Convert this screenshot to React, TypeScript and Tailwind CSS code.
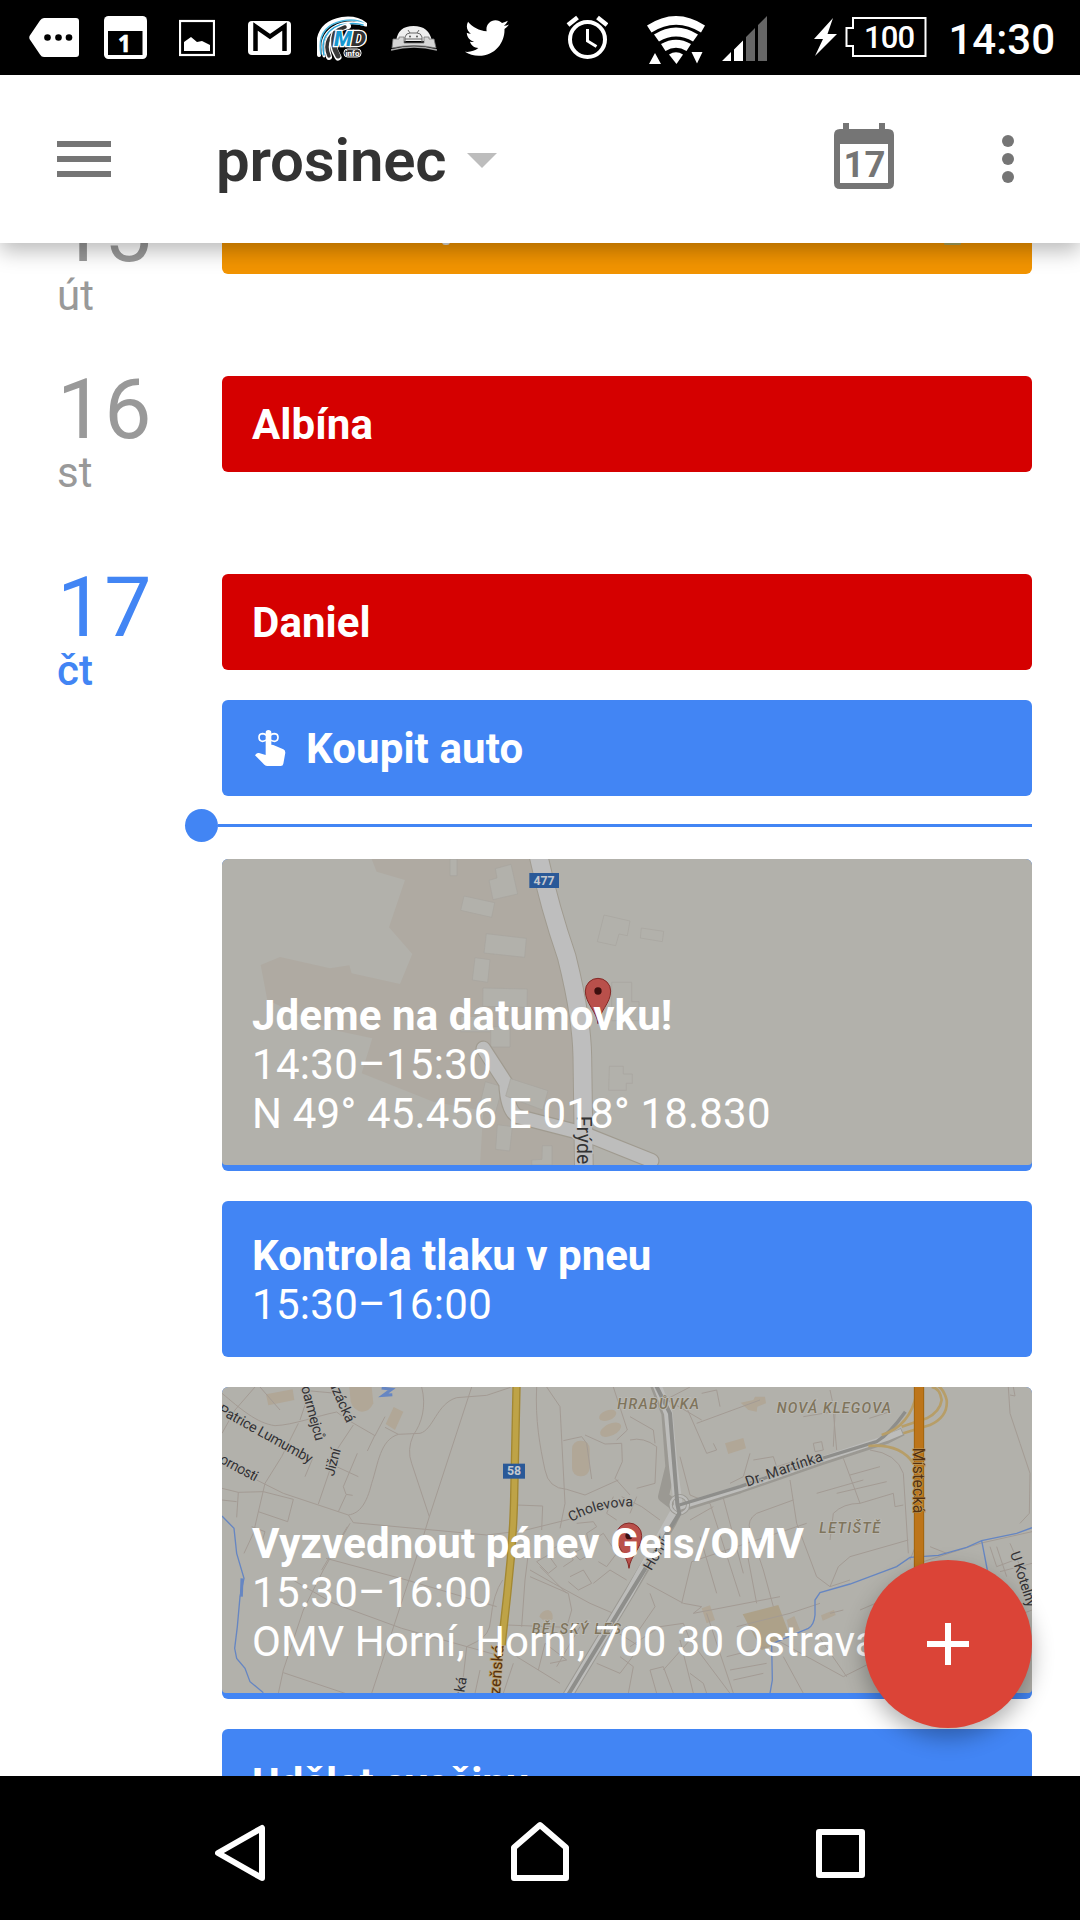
import React from "react";
import {FaTwitter} from "react-icons/fa";

const StatusBar = () => (
    <div className="flex h-[75px] w-full shrink-0 bg-black text-white">
        <svg className="ml-[29px] h-[75px] w-[50px]" viewBox="29 0 50 75">
            <path d="M44 18H76Q79 18 79 21V54Q79 57 76 57H44Q41.500 57 40 54.500L29.500 39Q29 37.500 29.500 36L40 20.500Q41.500 18 44 18Z" fill="#fff"/>
            <circle cx="47.500" cy="37.500" r="3.300"/>
            <circle cx="58.500" cy="37.500" r="3.300"/>
            <circle cx="69" cy="37.500" r="3.300"/>
        </svg>
        <svg className="ml-[25px] h-[75px] w-[43px]" viewBox="105 0 43 75">
            <rect x="105" y="16" width="43" height="43" rx="4.500" fill="#fff"/>
            <rect x="109" y="31" width="34.500" height="24"/>
            <text x="125.500" y="51.500" textAnchor="middle" fill="#fff" stroke="#fff" strokeWidth=".6" fontSize="22.500" fontWeight="700" fontFamily="Noto Sans, sans-serif">1</text>
        </svg>
        <svg className="ml-[32px] h-[75px] w-[36px]" viewBox="180 0 36 75">
            <rect x="181" y="21" width="34" height="34" fill="none" stroke="#fff" strokeWidth="2.200"/>
            <path d="M185 51V42L192 37L198 42L203 41L211 45V51Z" fill="#fff"/>
        </svg>
        <svg className="ml-[33px] h-[75px] w-[43px]" viewBox="248 0 43 75">
            <rect x="248" y="21" width="43" height="34" rx="4" fill="#fff"/>
            <path d="M255.500 51V26.500L270 36.500L284.500 26.500V51" fill="none" stroke="#000" strokeWidth="4.500"/>
        </svg>
        <svg className="ml-[26px] h-[75px] w-[50px]" viewBox="317 0 50 75">
            <g fill="none" strokeLinecap="round">
                <path d="M319 55Q314 24 342 19Q356 17 365 24" stroke="#fff" strokeWidth="4"/>
                <path d="M321 54Q316 27 342 21Q356 18 365 24" stroke="#4db8e0" strokeWidth="1.500"/>
                <path d="M324 56Q318 32 342 24Q354 21 366 25" stroke="#fff" strokeWidth="3"/>
                <path d="M324 55Q319 33 340 25Q354 22 363 25" stroke="#2ba5d8" strokeWidth="1.500"/>
                <path d="M329 57Q321 33 348 26" stroke="#fff" strokeWidth="6"/>
                <path d="M329 56Q321 36 345 27" stroke="#333" strokeWidth="3.500"/>
                <path d="M338 57Q330 44 335 33" stroke="#fff" strokeWidth="7"/>
                <path d="M338 56Q331 44 335 33" stroke="#3b3b3b" strokeWidth="5"/>
            </g>
            <g fontFamily="Roboto, sans-serif" fontSize="21" fontWeight="900" fontStyle="italic" stroke="#fff" strokeWidth="2.500" paintOrder="stroke">
                <text x="334" y="46" fill="#1797cf" textLength="18" lengthAdjust="spacingAndGlyphs">M</text>
                <text x="351" y="46" fill="#333" textLength="15" lengthAdjust="spacingAndGlyphs">D</text>
            </g>
            <rect x="344" y="49" width="17" height="8" rx="3.500" fill="#333" stroke="#fff"/>
            <text x="352.500" y="56" textAnchor="middle" fill="#fff" fontSize="8" fontWeight="700" fontFamily="Roboto, sans-serif">info</text>
        </svg>
        <svg className="ml-[24px] h-[75px] w-[46px]" viewBox="391 0 46 75">
            <path d="M396 41Q398 26 413.500 26Q429 26 432 41Z" fill="#eee"/>
            <path d="M393 39H399V37H404V43H424V37H429V39H434L436 48Q414 43 392 48Z" fill="#d6d6d6" stroke="#777" strokeWidth=".8"/>
            <path d="M405 42V37Q406 33 410 33L408 30M422 42V37Q421 33 417 33L419 30M410 33H417M405 39H422" fill="none" stroke="#666"/>
            <path d="M391 50Q414 44 437 50" fill="none" stroke="#aaa" strokeWidth="1.500"/>
            <circle cx="410" cy="36.500" r="1" fill="#555"/>
            <circle cx="417" cy="36.500" r="1" fill="#555"/>
        </svg>
        <FaTwitter className="mt-[15.500px] ml-[28px] h-[44px] w-[44px]"/>
        <svg className="ml-[56.500px] h-[75px] w-[42px]" viewBox="566 0 42 75">
            <circle cx="587.500" cy="39.500" r="17.500" fill="none" stroke="#fff" strokeWidth="4"/>
            <path d="M587.500 29V41L596.500 46.500" fill="none" stroke="#fff" strokeWidth="3"/>
            <path d="M568 25L577.500 17.500M607 25L597.500 17.500" stroke="#fff" strokeWidth="4.500"/>
        </svg>
        <svg className="ml-[39px] h-[75px] w-[58px]" viewBox="647 0 58 75">
            <path d="M647 25.500Q676 6.500 705 25.500L701 32.500Q676 17 651.500 32.500Z" fill="#fff"/>
            <path d="M654 34.500Q676 20.500 698 34.500L693 41.500Q676 31.500 659 41.500Z" fill="#fff"/>
            <path d="M661 44Q676 35.500 691 44L686.500 51Q676 44.500 665.500 51Z" fill="#fff"/>
            <path d="M669 54.500Q676 50 683 54.500L676.500 64Z" fill="#fff"/>
            <path d="M655 53L661 64H649ZM691.500 52H702.500L697 63.500Z" fill="#fff"/>
        </svg>
        <svg className="ml-[17px] h-[75px] w-[45px]" viewBox="722 0 45 75">
            <path d="M722 61L731 52V61ZM734 61V49.500L743 40.500V61Z" fill="#fff"/>
            <path d="M746 61V37L755 28V61ZM758 61V25L767 16V61Z" fill="#666"/>
        </svg>
        <svg className="ml-[47px] h-[75px] w-[23px]" viewBox="814 0 23 75">
            <path d="M833 18L814 39H823L815 56L837 34H827.500Z" fill="#fff"/>
        </svg>
        <svg className="ml-[8px] h-[75px] w-[82px]" viewBox="845 0 82 75">
            <path d="M853 18H925.500V56H853V46H846.500V28H853Z" fill="none" stroke="#fff" strokeWidth="2"/>
            <text x="889.500" y="48" textAnchor="middle" fill="#fff" fontSize="31" fontWeight="500" fontFamily="Roboto, sans-serif" textLength="51">100</text>
        </svg>
        <span className="mt-[15px] ml-[22px] text-[42px] leading-[49px] font-medium">14:30</span>
    </div>
);

const Header = () => (
    <header className="relative z-10 flex h-[168px] w-full shrink-0 items-center bg-white text-[#757575] shadow-[0_8px_20px_rgba(0,0,0,0.27)]">
        <div className="ml-[57px] flex w-[54px] flex-col gap-[9px]">
            <div className="h-[6px] bg-[#757575]"></div>
            <div className="h-[6px] bg-[#757575]"></div>
            <div className="h-[6px] bg-[#757575]"></div>
        </div>
        <h1 className="mt-[4px] ml-[105px] w-[232px] text-[60px] leading-[70px] font-semibold tracking-[-0.2px] text-[#333]">prosinec</h1>
        <svg className="mt-[3px] ml-[19px] h-[15px] w-[30px]" viewBox="0 0 30 15">
            <path d="M0 0H30L15 15Z" fill="#bdbdbd"/>
        </svg>
        <svg className="mb-[6px] ml-[337px] h-[66px] w-[60px]" viewBox="834 123 60 66">
            <path d="M843 123H849V129H879V123H885V129H888Q894 129 894 135V183Q894 189 888 189H840Q834 189 834 183V135Q834 129 840 129H843ZM840 144V183H888V144Z" fill="#757575" fillRule="evenodd"/>
            <text x="864.500" y="177" textAnchor="middle" fill="#757575" fontSize="36.500" fontWeight="700" fontFamily="Roboto, sans-serif">17</text>
        </svg>
        <div className="ml-[108px] flex w-[12px] flex-col gap-[6px]">
            <div className="h-[12px] rounded-full bg-[#757575]"></div>
            <div className="h-[12px] rounded-full bg-[#757575]"></div>
            <div className="h-[12px] rounded-full bg-[#757575]"></div>
        </div>
    </header>
);

const Pin = ({x, y}: { x: number; y: number }) => (
    <g transform={`translate(${x} ${y})`}>
        <path d="M0 98C-4 60 -38 38 -38 0A38 38 0 0 1 38 0C38 38 4 60 0 98Z" fill="#b9504b" stroke="#842a27" strokeWidth="3"/>
        <circle r="11" fill="#3d0f0e"/>
    </g>
);

const VillageMap = () => (
    <svg className="absolute inset-0 h-[306px] w-[810px]" viewBox="6 27 2430 918" fontFamily="Roboto, sans-serif">
        <rect x="6" y="27" width="2430" height="918" fill="#b2b1ab"/>
        <path d="M455 27L470 65L555 90L507 232L577 312L540 402L395 370L388 346L330 355L180 321L122 345L142 450L330 538L457 565L425 670L640 755L790 782L780 945H1070L1080 600L1040 330L955 27Z" fill="#afaaa2"/>
        <g fill="#b2b1ab" stroke="#a7a59e" strokeWidth="2">
            <path d="M690 27H711V77H690Z"/>
            <path d="M826 56L873 43L893 132L819 149L807 91L831 84Z"/>
            <path d="M732 138L824 158L815 202L722 181Z"/>
            <path d="M799 251L919 265L914 322L792 309Z"/>
            <path d="M765 323L810 329L803 397L757 390Z"/>
            <path d="M789 414L922 417L921 472L788 469Z"/>
            <path d="M722 500L815 498V545L722 545Z"/>
            <path d="M812 530H870V591H812Z"/>
            <path d="M1152 195L1230 213L1222 257L1197 252L1187 287L1132 275Z"/>
            <path d="M1264 234L1331 244L1327 275L1261 264Z"/>
            <path d="M1175 397H1235V455H1257V512H1175Z"/>
            <path d="M1168 649H1210V672H1237V700H1219V721H1166Z"/>
            <path d="M796 695L848 710L826 790L778 770Z"/>
            <path d="M832 824L877 830L869 903L827 898Z"/>
            <path d="M967 887H996V945H935V930L966 928Z"/>
        </g>
        <g fill="none" strokeLinecap="round" strokeLinejoin="round">
            <path d="M790 595L858 700Q862 785 895 800L1090 850L1295 932" stroke="#a09b90" strokeWidth="47"/>
            <path d="M952 0Q985 160 1040 320Q1085 500 1087 620L1092 980" stroke="#a09b90" strokeWidth="59"/>
            <path d="M790 595L858 700Q862 785 895 800L1090 850L1295 932" stroke="#bdbdbc" strokeWidth="40"/>
            <path d="M952 0Q985 160 1040 320Q1085 500 1087 620L1092 980" stroke="#bebebe" strokeWidth="53"/>
        </g>
        <path d="M872 686L984 722L968 780L857 738Z" fill="#b2b1ab" stroke="#a7a59e" strokeWidth="2"/>
        <text transform="translate(1070 798) rotate(90)" fontSize="58" fill="#333" stroke="#bebebe" strokeWidth="8" paintOrder="stroke" textLength="145">Frýde</text>
        <rect x="928" y="69" width="89" height="45" fill="#2a5998"/>
        <text x="972" y="105" textAnchor="middle" fontSize="37" fontWeight="700" fill="#c3c8cf">477</text>
        <Pin x={1134} y={423}/>
    </svg>
);

const CityMap = () => (
    <svg className="absolute inset-0 h-[306px] w-[810px]" viewBox="6 21 2430 918" fontFamily="Roboto, sans-serif">
        <rect x="6" y="21" width="2430" height="918" fill="#b2b1ab"/>

        {/* buildings and sport grounds */}
        <g fill="#b1a797">
            <path d="M138 43L218 28L223 60L145 76Z"/>
            <path d="M388 21H455L460 70Q448 96 425 95Q400 90 392 65Z"/>
            <path d="M521 81L550 95L525 150L497 132Z"/>
            <rect x="1056" y="182" width="53" height="107" rx="25"/>
            <ellipse cx="1163" cy="106" rx="27" ry="15" transform="rotate(-20 1163 106)"/>
            <ellipse cx="1172" cy="149" rx="34" ry="18" transform="rotate(-25 1172 149)"/>
            <path d="M958 710Q965 690 985 690Q1000 695 998 715L985 735Z"/>
            <path d="M1562 68L1600 60L1605 50L1635 50L1638 70L1612 80L1610 95L1585 90Z"/>
            <path d="M1515 190L1570 174L1578 205L1525 222Z"/>
            <path d="M1445 685L1470 676L1485 720L1460 730Z"/>
            <path d="M1803 706L1842 690L1847 705L1808 722Z"/>
        </g>
        <path d="M1568 703L1675 675L1705 755L1652 800L1625 810Z" fill="#ada189"/>
        <path d="M1700 720L1723 708L1740 750L1710 760Z" fill="#b1a797"/>

        {/* side streets */}
        <g fill="none" stroke="#a39b94" strokeWidth="3" strokeLinejoin="round">
            <path d="M6 40C60 85 110 130 165 137C220 135 290 108 350 96L375 115L465 167L495 110"/>
            <path d="M105 21L45 90L6 160M120 21L180 90M240 30L350 40M265 45L240 120"/>
            <path d="M6 325L55 337L130 335L220 358L203 425L115 395M55 337L50 412M6 360L50 365"/>
            <path d="M235 130L185 230L135 310L100 460L72 520M95 440L135 455L120 505"/>
            <path d="M110 300L190 340L385 405L400 428L800 465L910 452L1080 410"/>
            <path d="M400 135L350 210L295 372M280 230L255 290M350 260L415 290"/>
            <path d="M465 165L442 213M412 220L370 320L378 343L398 346M378 345L355 395"/>
            <path d="M495 142L535 163L600 160C640 150 650 70 710 53L800 46L872 22"/>
            <path d="M605 21C620 80 605 130 580 165Q560 210 575 250L628 410L608 475L455 940"/>
            <path d="M755 21L628 410M535 163C480 180 475 250 455 310C440 370 420 400 385 405"/>
            <path d="M390 430L310 570L250 690L190 870L175 940M382 440L305 570"/>
            <path d="M318 535L560 600L830 680M210 595L340 670L545 745L830 825M190 878L390 945"/>
            <path d="M890 375L968 378L965 450M930 480L915 600L905 740M860 735L1040 742L1055 690L1045 640L930 590"/>
            <path d="M848 600Q820 640 812 720Q810 765 770 785L740 800L725 935M780 870L765 940"/>
            <path d="M950 21C945 120 960 200 975 270Q985 325 1040 328L1095 345L1195 300"/>
            <path d="M980 21L1020 80L1035 370L1020 445M1030 182L1085 170L1100 190L1115 297"/>
            <path d="M1095 165L1155 192L1205 190L1207 245L1185 295L1230 345M1180 21L1222 150L1190 180"/>
            <path d="M1070 430L1120 425L1130 440L1100 460L1115 520L1080 540L1060 520L1095 500"/>
            <path d="M950 545L985 525L1010 560L985 580ZM1000 505L1030 490L1060 540L1030 560M1050 590L1090 570L1115 610L1075 630L1045 605"/>
            <path d="M1120 480L1150 460L1190 520L1160 560L1135 545M1180 350L1160 400L1190 420M1205 350L1265 380L1320 420"/>
            <path d="M960 560L1040 640M930 570L1000 610L1110 670L1180 700M1120 610L1170 570L1220 600"/>
            <path d="M890 830L1020 910M880 850L850 940M955 870L975 790L1040 840L990 850M1080 740L1010 860"/>
            <path d="M1180 750L1260 800L1200 880L1130 850M1200 830L1240 860L1225 940M1190 760L1220 740"/>
        </g>
        <g fill="none" stroke="#a39b94" strokeWidth="3" strokeLinejoin="round" transform="translate(1230 0)">
            <path d="M95 50L215 120M180 21L115 55M160 60L230 220L260 210L250 190M200 130L390 60M215 40L260 30L270 80"/>
            <path d="M0 180Q40 170 80 200L75 310L20 325M0 110L70 150L75 190M150 230L180 345L240 370"/>
            <path d="M240 370L330 650M280 355L340 580M180 420L250 380M185 545L320 500L530 430"/>
            <path d="M370 240L430 230L440 260L490 245M360 220L340 290L300 310M520 110L610 95L620 210"/>
            <path d="M550 190L575 185L580 210L555 215ZM600 30L615 100L610 200M718 115L780 95"/>
            <path d="M490 360L380 400Q350 420 360 450L400 570L430 680M480 300L500 430L560 590L600 620L660 600"/>
            <path d="M560 340L700 300M640 235L690 370Q640 370 610 400L600 480M660 285L750 260M720 210Q800 220 820 280L835 520"/>
            <path d="M620 340L770 305M690 370L790 340L795 380L820 375M600 620L625 560L660 530L835 480"/>
            <path d="M50 610L160 670L215 680L190 700L450 650M185 545L155 670M210 470L260 640M340 460L380 670"/>
            <path d="M0 800L90 740L160 730L180 780L100 870M60 640L75 680L20 760M150 780L190 940"/>
            <path d="M180 780L300 940M270 820L310 940M290 830L410 800M300 870L410 850M310 900L400 880M230 700L270 820"/>
            <path d="M60 870L80 940M60 870L100 860L130 940M460 830L520 940M440 780L640 890L720 850M560 760L650 890"/>
            <path d="M320 740L480 700L570 670M600 700L640 690M690 690L760 660M180 880L220 910L230 940"/>
            <path d="M1150 21L1155 48L1140 45M1135 21L1140 100L1170 190L1200 280L1198 400L1170 430"/>
            <path d="M880 545L1050 490L1206 455M1080 500L1100 560L1180 530M1100 500L1130 590M1110 575L1206 550M1140 490L1206 640"/>
            <path d="M860 490L840 540M900 500L950 520M1180 700L1206 690M0 400L20 350"/>
        </g>

        {/* streams */}
        <g fill="none" stroke="#6686c2" strokeWidth="4">
            <path d="M6 408L42 445L50 520L72 595L60 650L52 740L44 805L50 835L75 865L90 905L130 938"/>
            <path d="M485 24L515 28L490 46L517 44" strokeWidth="9"/>
            <path d="M66 595L64 650" strokeWidth="9"/>
            <path d="M2436 443L2390 460L2285 482L2240 502L2155 526L2070 532L2030 560L1890 612L1800 638L1785 660V705Q1782 735 1765 745L1655 792L1657 900L1650 940M2285 482L2302 570"/>
        </g>

        {/* main roads */}
        <g fill="none" strokeLinejoin="round">
            <path d="M1300 0L1340 100L1352 260L1330 350L1375 385L1355 425L1230 635L1035 960" stroke="#9b9993" strokeWidth="32"/>
            <path d="M1380 385L1560 328L1800 245L2000 180L2048 155" stroke="#9b9993" strokeWidth="24"/>
            <path d="M1305 0L1345 100L1360 260L1375 375L1230 635L1035 960" stroke="#bdbdbb" strokeWidth="26"/>
            <path d="M1380 380L1560 324L1800 240L2000 174L2045 155" stroke="#bdbdbb" strokeWidth="18"/>
            <circle cx="1378" cy="374" r="26" stroke="#9b9993" strokeWidth="12"/>
            <circle cx="1378" cy="374" r="26" stroke="#bdbdbb" strokeWidth="7"/>
            <path d="M1300 0L1350 100L1372 372L1378 400L1230 640L1035 960" stroke="#8e8e8b" strokeWidth="12"/>
            <path d="M1378 375L1560 320L1800 237L1970 185Q2010 160 2056 95" stroke="#8e8e8b" strokeWidth="10"/>
            <path d="M1945 198Q2040 190 2080 250M1985 165Q2070 140 2090 40M2050 160L2130 135Q2185 110 2180 60Q2170 20 2140 10M2045 140L2120 115Q2160 95 2165 60Q2160 25 2135 21" stroke="#b79e68" strokeWidth="8"/>
            <path d="M890 0L882 370Q878 500 862 640L845 795" stroke="#a38832" strokeWidth="25"/>
            <path d="M890 0L882 370Q878 500 862 640L845 795" stroke="#bea347" strokeWidth="17"/>
            <path d="M2097 0V600" stroke="#a6670f" strokeWidth="31"/>
            <path d="M2097 0V600" stroke="#bd751a" strokeWidth="24"/>
        </g>
        <rect x="849" y="251" width="66" height="45" fill="#2a5998"/>
        <text x="882" y="286" textAnchor="middle" fontSize="37" fontWeight="700" fill="#c3c8cf">58</text>

        {/* street names */}
        <g fontSize="43" fill="#333235" stroke="#b2b1ab" strokeWidth="7" paintOrder="stroke">
            <text transform="translate(-8 98) rotate(29)" textLength="316">Patrice Lumumby</text>
            <text transform="translate(-4 247) rotate(28)" textLength="124">ornosti</text>
            <text transform="translate(243 22) rotate(75)" textLength="168">oarmejců</text>
            <text transform="translate(326 10) rotate(66)" textLength="132">azácká</text>
            <text transform="translate(341 290) rotate(-75)" textLength="84">Jižní</text>
            <text transform="translate(729 960) rotate(-80)">ská</text>
            <text transform="translate(1294 574) rotate(-60)">Horní</text>
            <text transform="translate(1582 320) rotate(-19)" textLength="242">Dr. Martínka</text>
            <text transform="translate(2370 520) rotate(72)" textLength="172">U Kotelny</text>
            <path id="cholevova" d="M1054 426Q1140 376 1250 379" fill="none" stroke="none"/>
            <text fontSize="42"><textPath href="#cholevova">Cholevova</textPath></text>
        </g>
        <g fontSize="47" fill="#54300f" stroke="#bd9b5c" strokeWidth="4" paintOrder="stroke">
            <text transform="translate(2078 203) rotate(90)" textLength="197">Místecká</text>
            <text transform="translate(840 945) rotate(-86)" textLength="150">zeňská</text>
        </g>
        <g fontSize="43" fontStyle="italic" fontWeight="500" fill="#7f745c" stroke="#bcbbb5" strokeWidth="5" paintOrder="stroke">
            <text x="1192" y="88" textLength="245">HRABŮVKA</text>
            <text x="1670" y="100" textLength="343">NOVÁ KLEGOVA</text>
            <text x="1798" y="460" textLength="182">LETIŠTĚ</text>
            <text x="935" y="762" textLength="268">BĚLSKÝ LES</text>
        </g>
        <Pin x={1227} y={467}/>
    </svg>
);

const DayLabel = ({day, name, today = false}: { day: string; name: string; today?: boolean }) => (
    <div className={`-mt-[8px] w-[222px] shrink-0 pl-[57px] ${today ? "text-[#4285f4]" : "text-[#999]"}`}>
        <div className="text-[84px] leading-[84px]">{day}</div>
        <div className={`text-[42px] leading-[42px] ${today ? "font-medium" : ""}`}>{name}</div>
    </div>
);

const AllDayEvent = ({title, color, icon}: { title: string; color: string; icon?: React.ReactNode }) => (
    <div className={`flex h-[96px] shrink-0 items-start rounded-[6px] pt-[24px] pl-[30px] ${color}`}>
        {icon}
        <span className="text-[42px] leading-[49px] font-bold tracking-[0.1px]">{title}</span>
    </div>
);

const MapEvent = ({title, time, place, children}: {
    title: string;
    time: string;
    place: React.ReactNode;
    children: React.ReactNode
}) => (
    <div className="h-[312px] shrink-0 overflow-hidden rounded-[6px] bg-[#4285f4] pb-[6px]">
        <div className="relative h-[306px] overflow-hidden rounded-b-[4px]">
            {children}
            <div className="relative pt-[132px] pl-[30px] text-[42px] leading-[49px] whitespace-nowrap">
                <div className="font-bold tracking-[0.12px]">{title}</div>
                <div className="tracking-[0.3px]">{time}</div>
                <div>{place}</div>
            </div>
        </div>
    </div>
);

const ReminderIcon = () => (
    <svg className="mt-[6px] mr-[20px] ml-[3px] h-[36px] w-[31px]" viewBox="285 120 93 108">
        <path d="M317 195V128Q317 120 325 120Q334 120 334 128V164L340 165L370 178Q376 181 376 188L370 221Q369 228 362 228H323Q317 228 313 224L285 196L289 191Q292 188 297 189Z" fill="#fff"/>
        <path d="M325 143Q318 131 307 131Q297 132 297 142Q297 153 307 154Q318 154 325 143Q332 131 344 131Q354 132 354 142Q354 153 344 154Q332 154 325 143Z" fill="none" stroke="#fff" strokeWidth="5"/>
    </svg>
);

const Agenda = () => (
    <main className="relative h-[1533px] w-full shrink-0 overflow-hidden bg-white text-white">
        <div className="-mt-[44px] flex h-[177px]">
            <DayLabel day="15" name="út"/>
            <div className="-mt-[21px] flex h-[96px] w-[810px] items-end rounded-[6px] bg-[#f29400] pb-[29px]">
                <div className="ml-[220px] h-[6px] w-[8px] rounded-full bg-[#dcdcdc]"></div>
                <div className="ml-[494px] h-[3px] w-[17px] rounded-full bg-[#a9a45c]"></div>
            </div>
        </div>
        <div className="flex h-[198px]">
            <DayLabel day="16" name="st"/>
            <div className="w-[810px]">
                <AllDayEvent title="Albína" color="bg-[#d50000]"/>
            </div>
        </div>
        <div className="flex">
            <DayLabel day="17" name="čt" today/>
            <div className="flex w-[810px] flex-col gap-[30px]">
                <AllDayEvent title="Daniel" color="bg-[#d50000]"/>
                <AllDayEvent title="Koupit auto" color="bg-[#4285f4]" icon={<ReminderIcon/>}/>
                <div className="-mt-[2px] mb-[2px] -ml-[37.5px] flex h-[3px] shrink-0 items-center">
                    <div className="h-[33px] w-[33px] shrink-0 rounded-full bg-[#4285f4]"></div>
                    <div className="h-[3px] flex-1 bg-[#4285f4]"></div>
                </div>
                <MapEvent
                    title="Jdeme na datumovku!"
                    time="14:30–15:30"
                    place={<span className="tracking-[0.2px]">N 49° 45.456 E 018° 18.830</span>}
                >
                    <VillageMap/>
                </MapEvent>
                <div className="h-[156px] shrink-0 rounded-[6px] bg-[#4285f4] pt-[30px] pl-[30px] text-[42px] leading-[49px]">
                    <div className="font-bold">Kontrola tlaku v pneu</div>
                    <div className="tracking-[0.3px]">15:30–16:00</div>
                </div>
                <MapEvent title="Vyzvednout pánev Geis/OMV" time="15:30–16:00" place="OMV Horní, Horní, 700 30 Ostrava">
                    <CityMap/>
                </MapEvent>
                <div className="h-[156px] shrink-0 rounded-[6px] bg-[#4285f4] pt-[30px] pl-[30px] text-[42px] leading-[49px]">
                    <div className="font-bold">Udělat svačinu</div>
                </div>
            </div>
        </div>
        <button className="absolute right-[48px] bottom-[48px] flex h-[168px] w-[168px] items-center justify-center rounded-full bg-[#db4437] shadow-[0_10px_22px_rgba(0,0,0,0.3)]">
            <svg className="h-[42px] w-[42px]" viewBox="0 0 42 42">
                <path d="M18 0H24V18H42V24H24V42H18V24H0V18H18Z" fill="#fff"/>
            </svg>
        </button>
    </main>
);

const NavBar = () => (
    <nav className="flex h-[144px] w-full shrink-0 bg-black">
        <svg className="ml-[215px] h-[144px] w-[50px]" viewBox="215 1776 50 144">
            <path d="M262 1828V1878L218 1853Z" fill="none" stroke="#fff" strokeWidth="6" strokeLinejoin="round"/>
        </svg>
        <svg className="ml-[246px] h-[144px] w-[58px]" viewBox="511 1776 58 144">
            <path d="M514 1878V1847.500L540 1825L566 1847.500V1878Z" fill="none" stroke="#fff" strokeWidth="6" strokeLinejoin="round"/>
        </svg>
        <svg className="ml-[247px] h-[144px] w-[50px]" viewBox="816 1776 50 144">
            <rect x="819" y="1832" width="43" height="43" fill="none" stroke="#fff" strokeWidth="6" strokeLinejoin="round"/>
        </svg>
    </nav>
);

export default function App() {
    return (
        <div className="flex h-[1920px] w-[1080px] flex-col overflow-hidden bg-white font-[Roboto,sans-serif]">
            <StatusBar/>
            <Header/>
            <Agenda/>
            <NavBar/>
        </div>
    );
}
